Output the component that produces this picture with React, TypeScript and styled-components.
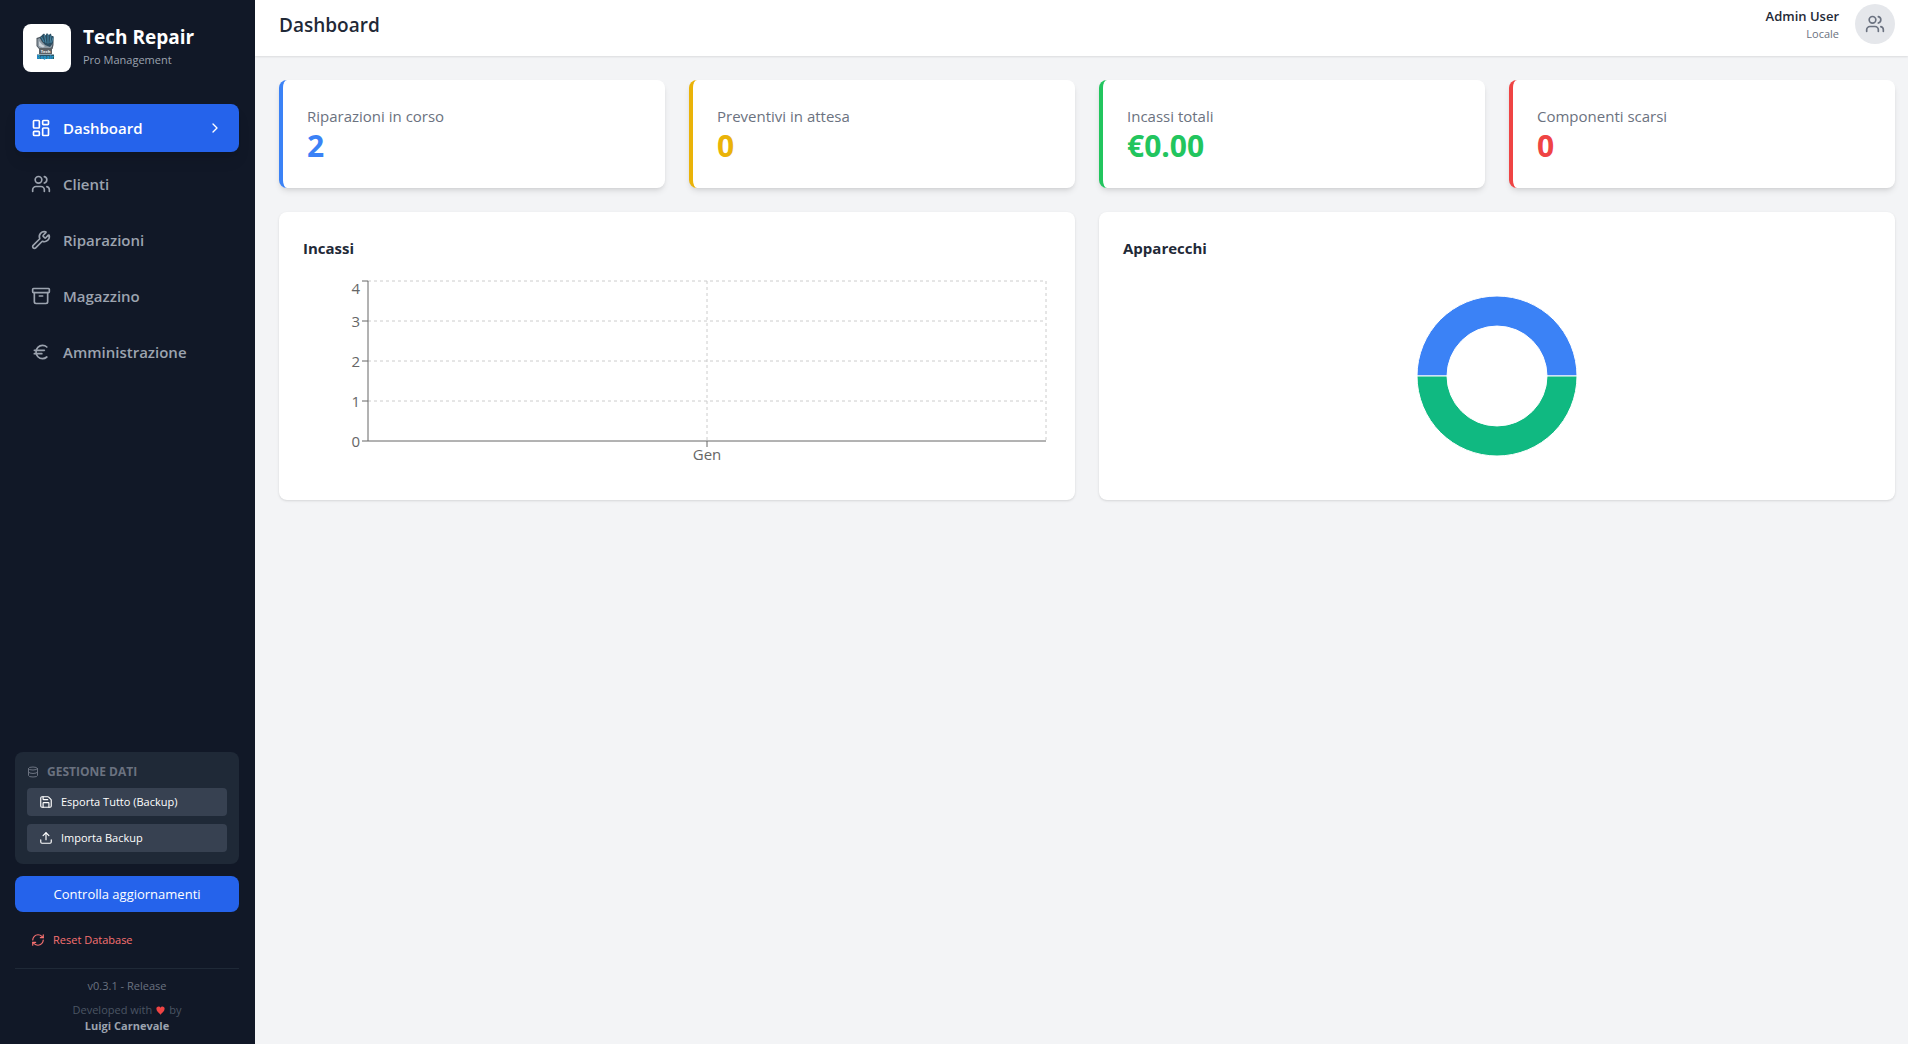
import React, { useLayoutEffect, useRef, useState } from "react";
import styled, { createGlobalStyle } from "styled-components";
import {
  Archive,
  ChevronRight,
  Database,
  Euro,
  LayoutDashboard,
  RefreshCw,
  Save,
  Upload,
  Users,
  Wrench,
  type LucideIcon,
} from "lucide-react";

const GlobalStyle = createGlobalStyle`
  *, *::before, *::after { box-sizing: border-box; }
  body {
    margin: 0;
    background: #f3f4f6;
    color: #1f2937;
    font-family: "Open Sans", "Noto Sans", sans-serif;
    font-size: 15px;
    line-height: 24px;
  }
  h1, h2, p { margin: 0; }
  button { font-family: inherit; border: 0; cursor: pointer; }
  svg { display: block; flex-shrink: 0; }
`;

const Shell = styled.div`
  display: flex;
  min-height: 100vh;
`;

const Sidebar = styled.aside`
  display: flex;
  flex-direction: column;
  flex: 0 0 255px;
  padding: 24px 16px 10px 15px;
  background: #111827;
  color: #ffffff;
`;

const Brand = styled.div`
  display: flex;
  align-items: center;
  gap: 12px;
  padding: 0 8px;
  margin-bottom: 32px;
`;

const LogoTile = styled.div`
  display: grid;
  place-items: center;
  width: 48px;
  height: 48px;
  border-radius: 8px;
  background: #ffffff;
`;

const BrandName = styled.p`
  font-size: 19px;
  font-weight: 700;
  line-height: 24px;
`;

const BrandTag = styled.p`
  font-size: 11px;
  line-height: 22px;
  color: #9ca3af;
`;

const Nav = styled.nav`
  display: flex;
  flex-direction: column;
  gap: 8px;
`;

const NavButton = styled.button<{ $active?: boolean }>`
  display: flex;
  align-items: center;
  gap: 12px;
  height: 48px;
  padding: 0 16px;
  border-radius: 8px;
  background: ${(p) => (p.$active ? "#2563eb" : "transparent")};
  color: ${(p) => (p.$active ? "#ffffff" : "#9ca3af")};
  box-shadow: ${(p) => (p.$active ? "0 10px 15px -3px rgba(0, 0, 0, 0.1), 0 4px 6px -4px rgba(0, 0, 0, 0.1)" : "none")};
  font-size: 15px;
  font-weight: 600;
  line-height: 24px;
`;

const NavLabel = styled.span`
  flex: 1;
  text-align: left;
`;

const SidebarBottom = styled.div`
  display: flex;
  flex-direction: column;
  gap: 12px;
  margin-top: auto;
`;

const DataPanel = styled.section`
  display: flex;
  flex-direction: column;
  gap: 8px;
  padding: 12px;
  border-radius: 8px;
  background: #1f2937;
`;

const DataTitle = styled.h2`
  display: flex;
  align-items: center;
  gap: 8px;
  color: #6b7280;
  font-size: 12px;
  font-weight: 700;
  line-height: 16px;
`;

const DataButton = styled.button`
  display: flex;
  align-items: center;
  gap: 8px;
  height: 28px;
  padding: 0 12px;
  border-radius: 4px;
  background: #374151;
  color: #ffffff;
  font-size: 11px;
  line-height: 16px;
`;

const UpdateButton = styled.button`
  height: 36px;
  border-radius: 8px;
  background: #2563eb;
  color: #ffffff;
  font-size: 13px;
  line-height: 20px;
`;

const ResetButton = styled.button`
  display: flex;
  align-items: center;
  gap: 8px;
  height: 32px;
  padding: 0 16px;
  background: transparent;
  color: #f87171;
  font-size: 11px;
  line-height: 16px;
`;

const Credits = styled.footer`
  display: flex;
  flex-direction: column;
  gap: 8px;
  padding-top: 9px;
  border-top: 1px solid #1f2937;
  color: #6b7280;
  font-size: 11px;
  line-height: 16px;
  text-align: center;
`;

const Author = styled.div`
  color: #4b5563;
`;

const MadeWith = styled.p`
  display: flex;
  align-items: center;
  justify-content: center;
  gap: 4px;
`;

const AuthorName = styled.p`
  color: #9ca3af;
  font-weight: 700;
`;

const Page = styled.div`
  display: flex;
  flex: 1;
  flex-direction: column;
  min-width: 0;
`;

const TopBar = styled.header`
  display: flex;
  align-items: flex-start;
  justify-content: space-between;
  padding: 4px 13px 10px 24px;
  background: #ffffff;
  box-shadow: 0 1px 2px rgba(0, 0, 0, 0.1);
`;

const PageTitle = styled.h1`
  font-size: 19px;
  font-weight: 600;
  line-height: 42px;
`;

const Account = styled.div`
  display: flex;
  align-items: center;
  gap: 16px;
  text-align: right;
`;

const AccountName = styled.p`
  font-size: 13px;
  font-weight: 600;
  line-height: 20px;
`;

const AccountPlace = styled.p`
  color: #6b7280;
  font-size: 11px;
  line-height: 16px;
`;

const Avatar = styled.div`
  display: grid;
  place-items: center;
  width: 40px;
  height: 40px;
  border-radius: 50%;
  background: #e5e7eb;
  color: #6b7280;
`;

const Content = styled.main`
  display: flex;
  flex-direction: column;
  gap: 24px;
  padding: 24px 13px 24px 24px;
`;

const StatGrid = styled.div`
  display: grid;
  grid-template-columns: repeat(4, minmax(0, 1fr));
  gap: 24px;
`;

const StatCard = styled.section<{ $accent: string }>`
  padding: 24px;
  border-left: 4px solid ${(p) => p.$accent};
  border-radius: 8px;
  background: #ffffff;
  box-shadow: 0 4px 6px -1px rgba(0, 0, 0, 0.1), 0 2px 4px -2px rgba(0, 0, 0, 0.1);
`;

const StatLabel = styled.p`
  color: #6b7280;
  line-height: 24px;
`;

const StatValue = styled.p<{ $accent: string }>`
  color: ${(p) => p.$accent};
  font-size: 30px;
  font-weight: 700;
  line-height: 36px;
`;

const ChartGrid = styled.div`
  display: grid;
  grid-template-columns: repeat(2, minmax(0, 1fr));
  gap: 24px;
`;

const ChartCard = styled.section`
  padding: 24px;
  border-radius: 8px;
  background: #ffffff;
  box-shadow: 0 1px 3px rgba(0, 0, 0, 0.1), 0 1px 2px -1px rgba(0, 0, 0, 0.1);
`;

const ChartTitle = styled.h2`
  margin-bottom: 16px;
  font-size: 15px;
  font-weight: 700;
  line-height: 24px;
`;

const ChartFrame = styled.div`
  height: 200px;
`;

const TickText = styled.text`
  fill: #666666;
  font-size: 15px;
`;

const navItems: { label: string; icon: LucideIcon }[] = [
  { label: "Dashboard", icon: LayoutDashboard },
  { label: "Clienti", icon: Users },
  { label: "Riparazioni", icon: Wrench },
  { label: "Magazzino", icon: Archive },
  { label: "Amministrazione", icon: Euro },
];

const stats = [
  { label: "Riparazioni in corso", value: "2", accent: "#3b82f6" },
  { label: "Preventivi in attesa", value: "0", accent: "#eab308" },
  { label: "Incassi totali", value: "€0.00", accent: "#22c55e" },
  { label: "Componenti scarsi", value: "0", accent: "#ef4444" },
];

const LogoText = styled.text<{ $size: number }>`
  font-size: ${(p) => p.$size}px;
  font-weight: 800;
  text-anchor: middle;
`;

function BrandLogo() {
  return (
    <svg width="32" height="32" viewBox="0 0 32 32" role="img" aria-label="Tech Repair">
      <path d="M5.500 6l3-1 2-1 8 1 4 0v8l-1 4H8l-2.500-3z" fill="#4a545d" />
      <path d="M6.500 7l2.500-1 2 4 4 3 5-2 2-3-1 7-3 2H9l-2.500-3z" fill="#8d99a3" />
      <path d="M8 9l3 3.500 3 1.500-2 1.500-4-1.500z" fill="#c9d1d7" />
      <path d="M9 6l2-3 2-1.500 1.500 2L16 1l1.500 2L20 1.500 20.500 4l2 0-.5 7-3 4-5-2-3-4z" fill="#2b4d61" />
      <path d="M10.500 5l2.500 5M13.500 3l1.500 8M17 2.500l0 9M20 3.500l-1 7.500M22 5.500l-1.500 5" stroke="#4789a8" strokeWidth="1" fill="none" />
      <path d="M8 16h13v6H8z" fill="#5c6064" />
      <path d="M6 22.500h17v4.500H6z" fill="#2a5268" />
      <LogoText x="14.500" y="21" $size={4} fill="#e3e6e8">Tech</LogoText>
      <LogoText x="14.500" y="27" $size={5} fill="#28a0d6">Repair</LogoText>
    </svg>
  );
}

function HeartIcon() {
  return (
    <svg width="9" height="9" viewBox="0 0 24 24" fill="#ef4444" aria-hidden="true">
      <path d="M12 23C8 19 1 13.500 1 7.500 1 4 3.500 1.500 6.800 1.500c2.200 0 4.200 1.200 5.200 3 1-1.800 3-3 5.200-3C20.500 1.500 23 4 23 7.500 23 13.500 16 19 12 23z" />
    </svg>
  );
}

function useWidth() {
  const ref = useRef<HTMLDivElement>(null);
  const [width, setWidth] = useState(748);
  useLayoutEffect(() => {
    const node = ref.current;
    if (!node) return;
    const update = () => setWidth(node.clientWidth);
    update();
    const observer = new ResizeObserver(update);
    observer.observe(node);
    return () => observer.disconnect();
  }, []);
  return { ref, width };
}

function RevenueChart() {
  const { ref, width } = useWidth();
  const left = 65;
  const right = width - 5;
  const middle = (left + right) / 2;
  const top = 5;
  const bottom = 165;
  const ticks = [0, 1, 2, 3, 4];
  const yOf = (tick: number) => bottom - (tick * (bottom - top)) / 4;
  return (
    <ChartFrame ref={ref}>
      <svg width={width} height={200} role="img" aria-label="Incassi">
        <g stroke="#cccccc" strokeDasharray="3 3">
          {ticks.slice(1).map((t) => (
            <line key={t} x1={left} x2={right} y1={yOf(t)} y2={yOf(t)} />
          ))}
          {[middle, right].map((x) => (
            <line key={x} x1={x} x2={x} y1={top} y2={bottom} />
          ))}
        </g>
        <g stroke="#666666">
          <line x1={left} x2={right} y1={bottom} y2={bottom} />
          <line x1={left} x2={left} y1={top} y2={bottom} />
          <line x1={middle} x2={middle} y1={bottom} y2={bottom + 6} />
          {ticks.map((t) => (
            <line key={t} x1={left - 6} x2={left} y1={yOf(t)} y2={yOf(t)} />
          ))}
        </g>
        {ticks.map((t) => (
          <TickText key={t} x={left - 8} y={Math.max(yOf(t), 12) + 6} textAnchor="end">
            {t}
          </TickText>
        ))}
        <TickText x={middle} y={bottom + 19} textAnchor="middle">
          Gen
        </TickText>
      </svg>
    </ChartFrame>
  );
}

function DeviceChart() {
  const { ref, width } = useWidth();
  const cx = width / 2;
  const cy = 100;
  const half = (sweep: 0 | 1) =>
    `M${cx + 80} ${cy}A80 80 0 0 ${sweep} ${cx - 80} ${cy}H${cx - 50}A50 50 0 0 ${1 - sweep} ${cx + 50} ${cy}Z`;
  return (
    <ChartFrame ref={ref}>
      <svg width={width} height={200} role="img" aria-label="Apparecchi">
        <path d={half(0)} fill="#3b82f6" stroke="#ffffff" />
        <path d={half(1)} fill="#10b981" stroke="#ffffff" />
      </svg>
    </ChartFrame>
  );
}

export default function App() {
  return (
    <>
      <GlobalStyle />
      <Shell>
        <Sidebar>
          <Brand>
            <LogoTile>
              <BrandLogo />
            </LogoTile>
            <div>
              <BrandName>Tech Repair</BrandName>
              <BrandTag>Pro Management</BrandTag>
            </div>
          </Brand>
          <Nav>
            {navItems.map(({ label, icon: Icon }, index) => (
              <NavButton key={label} type="button" $active={index === 0}>
                <Icon size={20} />
                <NavLabel>{label}</NavLabel>
                {index === 0 && <ChevronRight size={16} />}
              </NavButton>
            ))}
          </Nav>
          <SidebarBottom>
            <DataPanel>
              <DataTitle>
                <Database size={12} />
                GESTIONE DATI
              </DataTitle>
              <DataButton type="button">
                <Save size={14} />
                Esporta Tutto (Backup)
              </DataButton>
              <DataButton type="button">
                <Upload size={14} />
                Importa Backup
              </DataButton>
            </DataPanel>
            <UpdateButton type="button">Controlla aggiornamenti</UpdateButton>
            <ResetButton type="button">
              <RefreshCw size={14} />
              Reset Database
            </ResetButton>
            <Credits>
              <p>v0.3.1 - Release</p>
              <Author>
                <MadeWith>
                  Developed with <HeartIcon /> by
                </MadeWith>
                <AuthorName>Luigi Carnevale</AuthorName>
              </Author>
            </Credits>
          </SidebarBottom>
        </Sidebar>
        <Page>
          <TopBar>
            <PageTitle>Dashboard</PageTitle>
            <Account>
              <div>
                <AccountName>Admin User</AccountName>
                <AccountPlace>Locale</AccountPlace>
              </div>
              <Avatar>
                <Users size={20} />
              </Avatar>
            </Account>
          </TopBar>
          <Content>
            <StatGrid>
              {stats.map((s) => (
                <StatCard key={s.label} $accent={s.accent}>
                  <StatLabel>{s.label}</StatLabel>
                  <StatValue $accent={s.accent}>{s.value}</StatValue>
                </StatCard>
              ))}
            </StatGrid>
            <ChartGrid>
              <ChartCard>
                <ChartTitle>Incassi</ChartTitle>
                <RevenueChart />
              </ChartCard>
              <ChartCard>
                <ChartTitle>Apparecchi</ChartTitle>
                <DeviceChart />
              </ChartCard>
            </ChartGrid>
          </Content>
        </Page>
      </Shell>
    </>
  );
}
